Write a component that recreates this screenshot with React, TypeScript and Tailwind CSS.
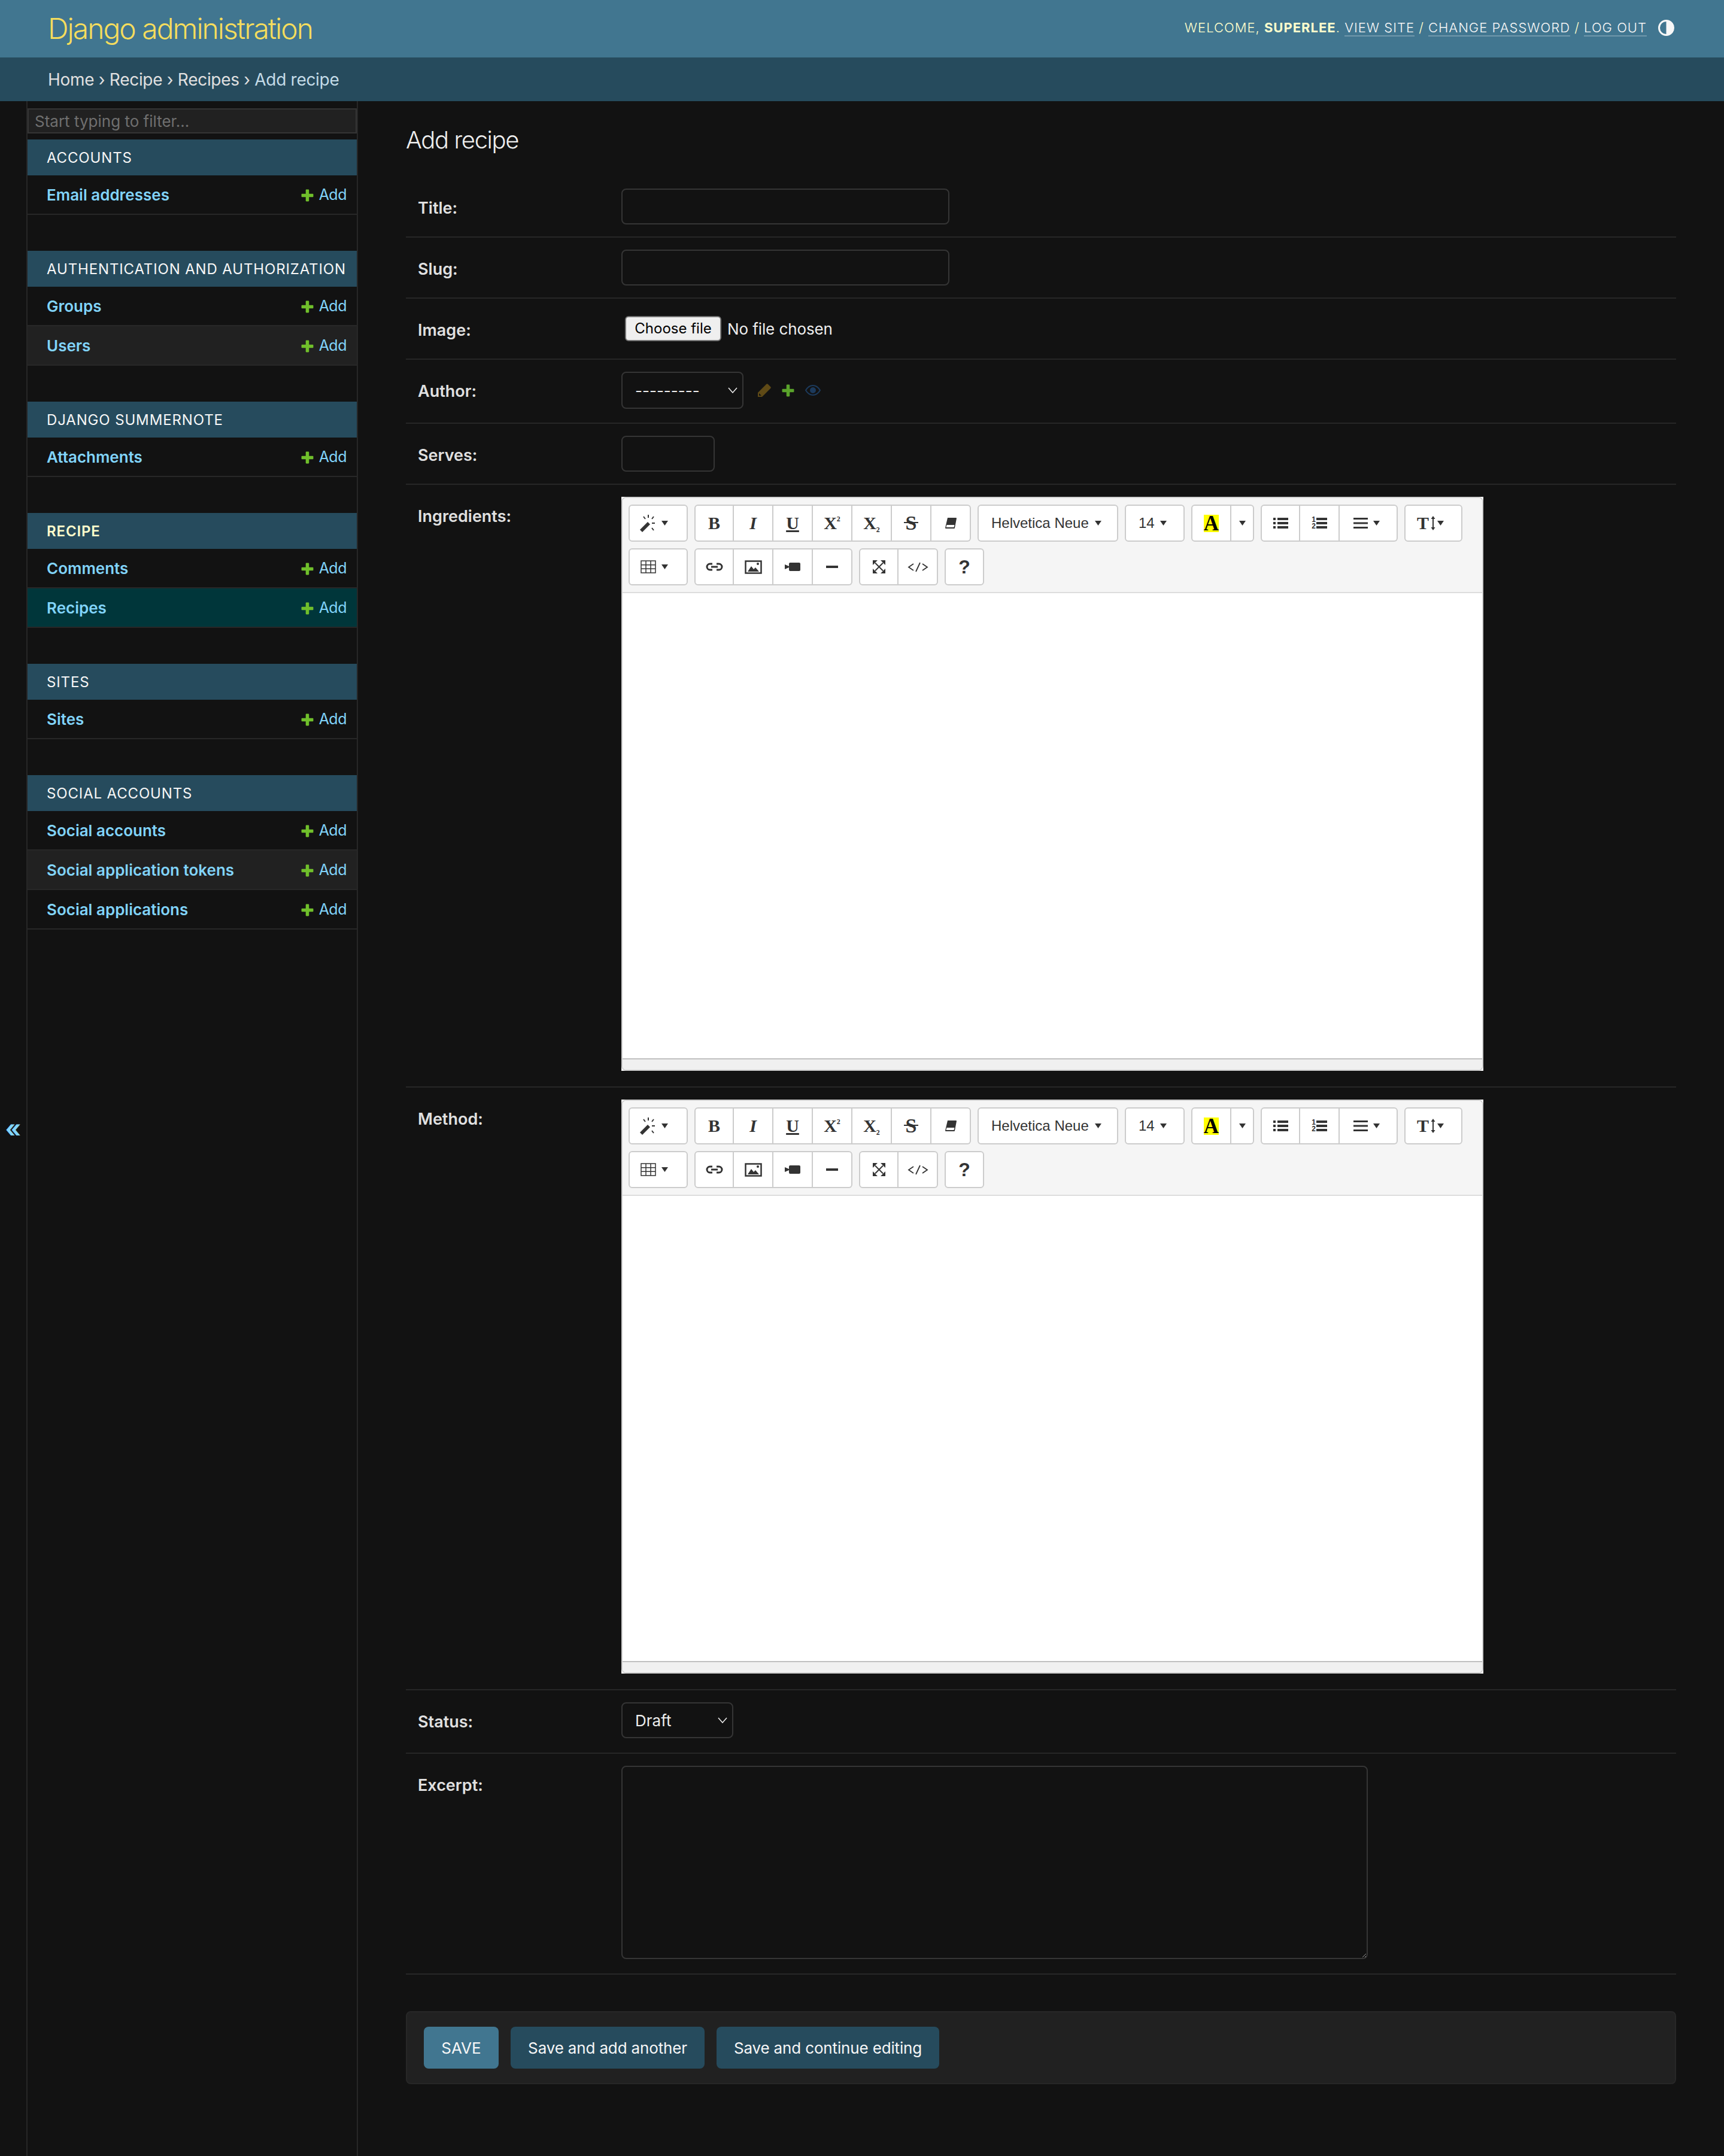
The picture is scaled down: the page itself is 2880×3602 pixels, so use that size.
const sections = [
  { name: "Accounts", models: ["Email addresses"] },
  { name: "Authentication and Authorization", models: ["Groups", "Users"] },
  { name: "Django Summernote", models: ["Attachments"] },
  { name: "Recipe", models: ["Comments", "Recipes"], current: true },
  { name: "Sites", models: ["Sites"] },
  { name: "Social Accounts", models: ["Social accounts", "Social application tokens", "Social applications"] },
]

const Caret = () => (
  <svg width="11" height="8" viewBox="0 0 11 8" className="shrink-0">
    <path d="M0 0h11L5.5 8z" fill="#333" />
  </svg>
)

const PlusIcon = ({ color = "#70bf2b" }: { color?: string }) => (
  <svg width="21" height="21" viewBox="1 1 19 19" className="shrink-0">
    <path d="M8 2.500a1 1 0 0 1 1-1h3a1 1 0 0 1 1 1V8h5.500a1 1 0 0 1 1 1v3a1 1 0 0 1-1 1H13v5.500a1 1 0 0 1-1 1H9a1 1 0 0 1-1-1V13H2.500a1 1 0 0 1-1-1V9a1 1 0 0 1 1-1H8z" fill={color} />
  </svg>
)

const Chevron = () => (
  <svg width="16" height="10" viewBox="0 0 16 10" className="shrink-0">
    <path d="M1 1l7 8 7-8" fill="none" stroke="#eeeeee" strokeWidth="1.5" />
  </svg>
)

const Wand = () => (
  <svg width="28" height="30" viewBox="0 0 28 30" className="shrink-0">
    <path d="M0 26l13-13 4 4L4 30z" fill="#333" />
    <path d="M14 1v5M6 4l3 4M23 4l-3 4M20 15h5M20 23l3 4" stroke="#333" strokeWidth="2" fill="none" />
  </svg>
)

const Eraser = () => (
  <svg width="21" height="20" viewBox="0 0 21 20">
    <path d="M5 1h14a1 1 0 0 1 1 1l-3 16a1 1 0 0 1-1 1H2a1 1 0 0 1-1-1z" fill="#333" />
    <path d="M3.500 13h13l-1 4h-13z" fill="#fff" />
  </svg>
)

const TableIcon = () => (
  <svg width="26" height="22" viewBox="0 0 26 22" className="shrink-0">
    <path d="M1 1h24v20H1zM1 7.700h24M1 14.300h24M9 1v20M17 1v20" fill="none" stroke="#333" strokeWidth="1.500" />
  </svg>
)

const LinkIcon = () => (
  <svg width="29" height="14" viewBox="0 0 29 14">
    <path d="M11 2H7a5 5 0 0 0 0 10h4M18 2h4a5 5 0 0 1 0 10h-4" fill="none" stroke="#333" strokeWidth="3" />
    <path d="M9 7h11" stroke="#333" strokeWidth="3" />
  </svg>
)

const ImageIcon = () => (
  <svg width="29" height="23" viewBox="0 0 29 23">
    <path d="M1.500 1.500h26v20h-26z" fill="none" stroke="#333" strokeWidth="2.500" />
    <path d="M5 19l6-9 4 5 3-3 6 7z" fill="#333" />
    <circle cx="22" cy="6" r="2" fill="#333" />
  </svg>
)

const VideoIcon = () => (
  <svg width="26" height="16" viewBox="0 0 26 16">
    <path d="M0 4l7 3V3a2 2 0 0 1 2-2h15a2 2 0 0 1 2 2v10a2 2 0 0 1-2 2H9a2 2 0 0 1-2-2V9l-7 3z" fill="#333" />
  </svg>
)

const FullscreenIcon = () => (
  <svg width="23" height="22" viewBox="0 0 23 22">
    <path d="M5 4.500l13 13M18 4.500l-13 13" stroke="#333" strokeWidth="2" fill="none" />
    <path d="M1 0h8L1 8zM22 0h-8l8 8zM1 22h8l-8-8zM22 22h-8l8-8z" fill="#333" />
  </svg>
)

const CodeIcon = () => (
  <svg width="35" height="17" viewBox="0 0 35 17">
    <path d="M10 3L2 8.500l8 5.500M25 3l8 5.500-8 5.500M21 1l-7 15" fill="none" stroke="#333" strokeWidth="1.800" />
  </svg>
)

const BulletList = () => (
  <svg width="25" height="20" viewBox="0 0 25 20">
    <path d="M0 1h4v4H0zM0 8h4v4H0zM0 15h4v4H0zM7 1h18v4H7zM7 8h18v4H7zM7 15h18v4H7z" fill="#333" />
  </svg>
)

const AlignIcon = () => (
  <svg width="24" height="18" viewBox="0 0 24 18" className="shrink-0">
    <path d="M0 0h24v3H0zM0 7.500h24v3H0zM0 15h24v3H0z" fill="#333" />
  </svg>
)

const Btn = ({ w, className = "justify-center gap-1", children }: { w: string; className?: string; children: React.ReactNode }) => (
  <div className={`${w} ${className} h-[62px] flex items-center bg-white border-y-2 border-r-2 border-[#cccccc] first:border-l-2 first:rounded-l-[6px] last:rounded-r-[6px] text-[#333] font-['Liberation_Sans',sans-serif]`}>
    {children}
  </div>
)

const Group = ({ children }: { children: React.ReactNode }) => <div className="flex">{children}</div>

const Glyph = ({ children, className = "" }: { children: React.ReactNode; className?: string }) => (
  <span className={`font-['Liberation_Serif',serif] font-bold text-[30px] leading-none ${className}`}>{children}</span>
)

const Editor = () => (
  <div className="w-[1440px] h-[959px] bg-white">
    <div className="h-full flex flex-col rounded-[8px] border-2 border-[#d0d0d0] overflow-hidden">
      <div className="bg-[#f5f5f5] pl-[10px] pt-[11px] pb-[11px] flex flex-col gap-[11px]">
        <div className="flex gap-[11px]">
          <Group><Btn w="w-[99px]" className="pl-[17px] gap-[8px]"><Wand /><Caret /></Btn></Group>
          <Group>
            <Btn w="w-[66px]"><Glyph>B</Glyph></Btn>
            <Btn w="w-[66px]"><Glyph className="italic">I</Glyph></Btn>
            <Btn w="w-[66px]"><Glyph className="underline">U</Glyph></Btn>
            <Btn w="w-[66px]"><Glyph>X<sup className="text-[12px] -top-[13px]">2</sup></Glyph></Btn>
            <Btn w="w-[66px]"><Glyph>X<sub className="text-[12px] -bottom-[5px]">2</sub></Glyph></Btn>
            <Btn w="w-[66px]">
              <span className="relative">
                <Glyph className="text-[34px]">S</Glyph>
                <span className="absolute left-[-3px] right-[-3px] top-[15px] h-[2px] bg-[#333]" />
              </span>
            </Btn>
            <Btn w="w-[66px]"><Eraser /></Btn>
          </Group>
          <Group><Btn w="w-[235px]" className="pl-[21px] gap-[10px]"><span className="text-[24px]">Helvetica Neue</span><Caret /></Btn></Group>
          <Group><Btn w="w-[100px]" className="pl-[21px] gap-[9px]"><span className="text-[24px]">14</span><Caret /></Btn></Group>
          <Group>
            <Btn w="w-[67px]"><span className="bg-[#ffff00] text-black font-['Liberation_Serif',serif] font-bold text-[35px] leading-[29px] h-[29px] w-[25px] flex justify-center">A</span></Btn>
            <Btn w="w-[38px]"><Caret /></Btn>
          </Group>
          <Group>
            <Btn w="w-[66px]"><BulletList /></Btn>
            <Btn w="w-[66px]">
              <span className="flex flex-col text-[12px] leading-[11px] font-bold -mr-[3px]"><span>1</span><span>2</span></span>
              <svg width="18" height="20" viewBox="0 0 18 20"><path d="M0 1h18v4H0zM0 8h18v4H0zM0 15h18v4H0z" fill="#333" /></svg>
            </Btn>
            <Btn w="w-[97px]" className="pl-[23px] gap-[9px]"><AlignIcon /><Caret /></Btn>
          </Group>
          <Group>
            <Btn w="w-[97px]" className="pl-[19px] gap-[3px]">
              <Glyph>T</Glyph>
              <svg width="8" height="24" viewBox="0 0 8 24" className="shrink-0"><path d="M4 0l3.500 5h-2.500v14h2.500L4 24 .5 19H3V5H.5z" fill="#333" /></svg>
              <Caret />
            </Btn>
          </Group>
        </div>
        <div className="flex gap-[11px]">
          <Group><Btn w="w-[99px]" className="pl-[18px] gap-[9px]"><TableIcon /><Caret /></Btn></Group>
          <Group>
            <Btn w="w-[66px]"><LinkIcon /></Btn>
            <Btn w="w-[66px]"><ImageIcon /></Btn>
            <Btn w="w-[66px]"><VideoIcon /></Btn>
            <Btn w="w-[66px]"><div className="w-[20px] h-[4px] bg-[#333]" /></Btn>
          </Group>
          <Group>
            <Btn w="w-[66px]"><FullscreenIcon /></Btn>
            <Btn w="w-[66px]"><CodeIcon /></Btn>
          </Group>
          <Group><Btn w="w-[66px]"><span className="text-[32px] font-bold leading-none">?</span></Btn></Group>
        </div>
      </div>
      <div className="flex-1 bg-white border-t-2 border-[#dddddd]" />
      <div className="h-[19px] bg-[#f0f0f0] border-t-2 border-[#c0c0c0]" />
    </div>
  </div>
)

const Row = ({ label, className = "py-[20px]", children }: { label: string; className?: string; children: React.ReactNode }) => (
  <div className={`flex border-b-2 border-[#272727] pl-[20px] ${className}`}>
    <label className="w-[340px] shrink-0 pt-[15px] text-[27px] leading-[36px] font-semibold text-[#e0e0e0]">{label}</label>
    {children}
  </div>
)

const inputCls = "h-[60px] bg-[#121212] border-2 border-[#353535] rounded-[8px] outline-none"

const Select = ({ w, h, children }: { w: string; h: string; children: React.ReactNode }) => (
  <div className={`${w} ${h} flex items-center justify-between pl-[21px] pr-[8px] border-2 border-[#353535] rounded-[8px] text-[26px] text-[#eeeeee]`}>
    <span>{children}</span>
    <Chevron />
  </div>
)

export default function App() {
  return (
    <div className="min-h-[3602px] flex flex-col bg-[#121212] text-[#eeeeee] font-['Inter',sans-serif]">
      <header className="h-[96px] shrink-0 bg-[#417690] flex items-center justify-between pl-[80px] pr-[83px]">
        <h1 className="text-[48px] font-light text-[#f5dd5d] tracking-[-2px] leading-none">Django administration</h1>
        <div className="flex items-center gap-[19px] pb-[3px]">
          <div className="text-[22px] tracking-[1px] uppercase text-[#ffffcc] font-light whitespace-nowrap">
            Welcome, <strong className="font-bold">superlee</strong>.{" "}
            <a className="text-[#f7f7f7] border-b-2 border-white/25">View site</a> /{" "}
            <a className="text-[#f7f7f7] border-b-2 border-white/25">Change password</a> /{" "}
            <a className="text-[#f7f7f7] border-b-2 border-white/25">Log out</a>
          </div>
          <svg width="27" height="27" viewBox="0 0 27 27">
            <circle cx="13.500" cy="13.500" r="12" fill="none" stroke="#f7f7f7" strokeWidth="3" />
            <path d="M13.500 1.500a12 12 0 0 1 0 24z" fill="#f7f7f7" />
          </svg>
        </div>
      </header>
      <div className="h-[73px] shrink-0 bg-[#264b5d] flex items-center pl-[80px] text-[28px] tracking-[-0.3px] text-[#e0e0e0] whitespace-pre">
        Home › Recipe › Recipes › <span className="text-[#c4dce8]">Add recipe</span>
      </div>

      <div className="flex flex-1">
        <div className="w-[44px] shrink-0 flex items-center justify-center text-[#81d4fa] text-[40px] font-bold">«</div>
        <aside className="w-[554px] shrink-0 border-x-2 border-[#272727] pt-[12px]">
          <input placeholder="Start typing to filter..." className="block w-full h-[42px] mb-[10px] px-[10px] bg-[#212121] border-2 border-[#353535] text-[26px] outline-none placeholder:text-[#6f6f6f]" />
          <div className="flex flex-col gap-[60px]">
            {sections.map((s) => (
              <section key={s.name}>
                <div className={`h-[60px] flex items-center pl-[32px] pt-[2px] bg-[#264b5d] text-[24px] tracking-[0.85px] uppercase ${s.current ? "text-[#ffffcc] font-semibold" : "text-[#f7f7f7]"}`}>
                  {s.name}
                </div>
                {s.models.map((m, i) => (
                  <div key={m} className={`h-[66px] flex items-center justify-between pl-[32px] pr-[17px] border-b-2 border-[#272727] ${m === "Recipes" ? "bg-[#00363a]" : i === 1 ? "bg-[#212121]" : ""}`}>
                    <span className="text-[26px] font-semibold text-[#81d4fa]">{m}</span>
                    <span className="flex items-center gap-[9px] pt-[2px] text-[25px] tracking-[-0.5px] text-[#81d4fa]"><PlusIcon />Add</span>
                  </div>
                ))}
              </section>
            ))}
          </div>
        </aside>

        <main className="flex-1 pl-[80px] pr-[80px] pt-[41px]">
          <h2 className="text-[40px] leading-[48px] font-light tracking-[-1.4px] text-[#eeeeee] mb-[37px]">Add recipe</h2>
          <Row label="Title:"><input className={`${inputCls} w-[548px]`} /></Row>
          <Row label="Slug:"><input className={`${inputCls} w-[548px]`} /></Row>
          <Row label="Image:">
            <div className="h-[60px] flex items-center gap-[10px] pl-[6px] text-[26px]">
              <button className="h-[42px] w-[161px] rounded-[6px] bg-[#efefef] border-2 border-[#767676] text-[24px] text-black">Choose file</button>
              <span className="text-[#eeeeee] tracking-[-0.1px]">No file chosen</span>
            </div>
          </Row>
          <Row label="Author:" className="pt-[20px] pb-[23px]">
            <div className="flex items-center gap-[24px]">
              <Select w="w-[204px]" h="h-[62px]">---------</Select>
              <div className="flex items-center gap-[18px]">
                <svg width="22" height="22" viewBox="0 0 22 22">
                  <path d="M0 22v-7L14 1a2 2 0 0 1 3 0l4 4a2 2 0 0 1 0 3L7 22z" fill="#5f4a16" />
                  <path d="M2 20v-4l4 4z" fill="#121212" />
                </svg>
                <PlusIcon color="#5aa32b" />
                <svg width="26" height="18" viewBox="0 0 26 18">
                  <path d="M1 9c3-5 7-8 12-8s9 3 12 8c-3 5-7 8-12 8S4 14 1 9z" fill="none" stroke="#1c3a5c" strokeWidth="2" />
                  <circle cx="13" cy="9" r="5" fill="#1c3a5c" />
                </svg>
              </div>
            </div>
          </Row>
          <Row label="Serves:"><input className={`${inputCls} w-[156px]`} /></Row>
          <Row label="Ingredients:" className="pt-[20px] pb-[26px]"><Editor /></Row>
          <Row label="Method:" className="pt-[20px] pb-[26px]"><Editor /></Row>
          <Row label="Status:" className="pt-[20px] pb-[24px]">
            <Select w="w-[187px]" h="h-[60px]">Draft</Select>
          </Row>
          <Row label="Excerpt:" className="pt-[20px] pb-[24px]">
            <textarea className="w-[1247px] h-[323px] bg-[#121212] border-2 border-[#353535] rounded-[8px] outline-none block [color-scheme:dark]" />
          </Row>
          <div className="mt-[61px] h-[122px] flex items-center gap-[20px] px-[28px] bg-[#212121] border-2 border-[#272727] rounded-[8px]">
            <button className="h-[70px] w-[125px] rounded-[8px] bg-[#417690] text-[26px] text-[#f7f7f7] uppercase">Save</button>
            <button className="h-[70px] w-[324px] rounded-[8px] bg-[#264b5d] text-[26px] tracking-[-0.15px] text-[#f7f7f7]">Save and add another</button>
            <button className="h-[70px] w-[372px] rounded-[8px] bg-[#264b5d] text-[26px] tracking-[-0.15px] text-[#f7f7f7]">Save and continue editing</button>
          </div>
        </main>
      </div>
    </div>
  )
}
